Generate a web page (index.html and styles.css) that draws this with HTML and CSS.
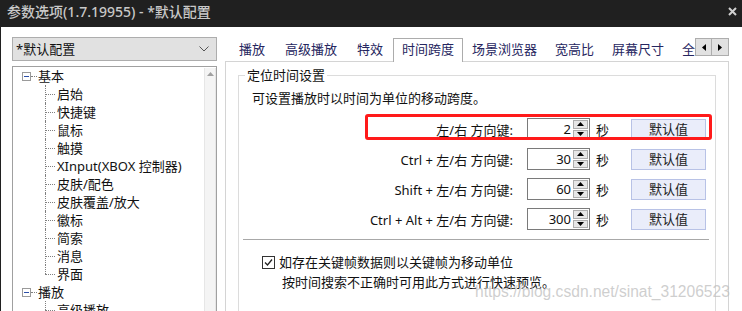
FILE: index.html
```html
<!DOCTYPE html>
<html lang="zh-CN">
<head>
    <meta charset="UTF-8">
    <title>参数选项</title>
    <link rel="stylesheet" href="styles.css">
</head>
<body>
    <div class="titlebar">
        <span class="title">参数选项(1.7.19955) - *默认配置</span>
        <svg class="close" width="9" height="9" viewBox="0 0 9 9"><path d="M1 1L8 8M8 1L1 8" stroke="#d0d0d0" stroke-width="2"/></svg>
    </div>

    <div class="window">
        <aside class="sidebar">
            <div class="select">
                <span>*默认配置</span>
                <svg width="10" height="6" viewBox="0 0 10 6"><path d="M0.5 0.5L5 5L9.5 0.5" fill="none" stroke="#555" stroke-width="1"/></svg>
            </div>
            <div class="tree">
                <ul class="tree-list">
                    <li class="node">
                        <div class="row root"><span class="toggle"></span><span class="dots"></span><span>基本</span></div>
                        <ul class="children">
                            <li class="row child"><span class="hdots"></span>启始</li>
                            <li class="row child"><span class="hdots"></span>快捷键</li>
                            <li class="row child"><span class="hdots"></span>鼠标</li>
                            <li class="row child"><span class="hdots"></span>触摸</li>
                            <li class="row child"><span class="hdots"></span>XInput(XBOX 控制器)</li>
                            <li class="row child"><span class="hdots"></span>皮肤/配色</li>
                            <li class="row child"><span class="hdots"></span>皮肤覆盖/放大</li>
                            <li class="row child"><span class="hdots"></span>徽标</li>
                            <li class="row child"><span class="hdots"></span>简索</li>
                            <li class="row child"><span class="hdots"></span>消息</li>
                            <li class="row child"><span class="hdots"></span>界面</li>
                        </ul>
                    </li>
                    <li class="node">
                        <div class="row root"><span class="toggle"></span><span class="dots"></span><span>播放</span></div>
                        <ul class="children open">
                            <li class="row child"><span class="hdots"></span>高级播放</li>
                        </ul>
                    </li>
                </ul>
                <div class="vscroll">
                    <svg width="7" height="4" viewBox="0 0 7 4"><path d="M0 4L3.5 0L7 4Z" fill="#a0a0a0"/></svg>
                </div>
            </div>
        </aside>

        <section class="options">
            <div class="tabs">
                <div class="tab">播放</div>
                <div class="tab">高级播放</div>
                <div class="tab">特效</div>
                <div class="tab active">时间跨度</div>
                <div class="tab narrow">场景浏览器</div>
                <div class="tab narrow">宽高比</div>
                <div class="tab narrow">屏幕尺寸</div>
                <div class="tab narrow">全屏</div>
                <div class="tab-scroll">
                    <span class="arrow"><svg width="4" height="7" viewBox="0 0 4 7"><path d="M4 0L0 3.5L4 7Z" fill="#000"/></svg></span>
                    <span class="arrow"><svg width="4" height="7" viewBox="0 0 4 7"><path d="M0 0L4 3.5L0 7Z" fill="#000"/></svg></span>
                </div>
            </div>

            <div class="panel">
                <fieldset class="group">
                    <legend>定位时间设置</legend>
                    <p class="hint">可设置播放时以时间为单位的移动跨度。</p>

                    <div class="rows">
                        <div class="key-row">
                            <span class="key-label">左/右 方向键:</span>
                            <div class="spin"><span class="spin-value">2</span><span class="spin-btns"><span class="sb"><svg width="7" height="4" viewBox="0 0 7 4"><path d="M0 4L3.5 0L7 4Z"/></svg></span><span class="sb"><svg width="7" height="4" viewBox="0 0 7 4"><path d="M0 0L3.5 4L7 0Z"/></svg></span></span></div>
                            <span class="unit">秒</span>
                            <button class="btn">默认值</button>
                        </div>
                        <div class="key-row">
                            <span class="key-label">Ctrl + 左/右 方向键:</span>
                            <div class="spin"><span class="spin-value">30</span><span class="spin-btns"><span class="sb"><svg width="7" height="4" viewBox="0 0 7 4"><path d="M0 4L3.5 0L7 4Z"/></svg></span><span class="sb"><svg width="7" height="4" viewBox="0 0 7 4"><path d="M0 0L3.5 4L7 0Z"/></svg></span></span></div>
                            <span class="unit">秒</span>
                            <button class="btn">默认值</button>
                        </div>
                        <div class="key-row">
                            <span class="key-label">Shift + 左/右 方向键:</span>
                            <div class="spin"><span class="spin-value">60</span><span class="spin-btns"><span class="sb"><svg width="7" height="4" viewBox="0 0 7 4"><path d="M0 4L3.5 0L7 4Z"/></svg></span><span class="sb"><svg width="7" height="4" viewBox="0 0 7 4"><path d="M0 0L3.5 4L7 0Z"/></svg></span></span></div>
                            <span class="unit">秒</span>
                            <button class="btn">默认值</button>
                        </div>
                        <div class="key-row">
                            <span class="key-label">Ctrl + Alt + 左/右 方向键:</span>
                            <div class="spin"><span class="spin-value">300</span><span class="spin-btns"><span class="sb"><svg width="7" height="4" viewBox="0 0 7 4"><path d="M0 4L3.5 0L7 4Z"/></svg></span><span class="sb"><svg width="7" height="4" viewBox="0 0 7 4"><path d="M0 0L3.5 4L7 0Z"/></svg></span></span></div>
                            <span class="unit">秒</span>
                            <button class="btn">默认值</button>
                        </div>
                    </div>

                    <div class="separator"></div>

                    <label class="check">
                        <span class="box"><svg width="11" height="11" viewBox="0 0 11 11"><path d="M2 5.5L4.5 8L9 2.5" fill="none" stroke="#222" stroke-width="1.3"/></svg></span>
                        如存在关键帧数据则以关键帧为移动单位
                    </label>
                    <p class="note">按时间搜索不正确时可用此方式进行快速预览。</p>
                </fieldset>
            </div>
        </section>
    </div>

    <div class="highlight"></div>
    <div class="watermark">https://blog.csdn.net/sinat_31206523</div>
</body>
</html>
```

FILE: styles.css
```css
* {
    margin: 0;
    padding: 0;
    box-sizing: border-box;
}

html, body {
    width: 742px;
    height: 311px;
    overflow: hidden;
    background-color: #fff;
    font-family: "Noto Sans", "Noto Sans CJK SC", sans-serif;
    font-size: 13px;
    color: #111;
}

body {
    position: relative;
}

/* title bar */
.titlebar {
    height: 27px;
    background-color: #202020;
    display: flex;
    align-items: center;
    justify-content: space-between;
    padding: 0 5px 3px 7px;
}

.title {
    font-size: 14px;
    line-height: 18px;
    color: #c8c8c8;
    font-weight: 500;
}

.close {
    margin-top: -2px;
}

.window {
    display: flex;
    height: 284px;
    padding-top: 10px;
    border-left: 1px solid #202020;
}

/* left column */
.sidebar {
    width: 205px;
    margin-left: 11px;
    display: flex;
    flex-direction: column;
}

.select {
    height: 24px;
    flex-shrink: 0;
    background-color: #e1e1e1;
    border: 1px solid #adadad;
    display: flex;
    align-items: center;
    justify-content: space-between;
    padding: 0 7px 0 3px;
    line-height: 18px;
}

.tree {
    margin-top: 5px;
    border: 1px solid #a0a0a0;
    border-bottom: none;
    flex: 1;
    min-height: 0;
    display: flex;
    overflow: hidden;
}

.tree-list {
    list-style: none;
    flex: 1;
}

.tree-list ul {
    list-style: none;
}

.row {
    height: 18px;
    line-height: 18px;
    display: flex;
    align-items: center;
    white-space: nowrap;
}

.root {
    padding-left: 9px;
}

.toggle {
    width: 9px;
    height: 9px;
    border: 1px solid #9a9a9a;
    background-color: #fff;
    display: flex;
    align-items: center;
    justify-content: center;
}

.toggle::after {
    content: "";
    width: 5px;
    height: 1px;
    background-color: #2c4fa8;
}

.dots {
    width: 6px;
    border-top: 1px dotted #808080;
    margin-right: 1px;
}

.children .child {
    position: relative;
    padding-left: 32px;
}

.children .child::before {
    content: "";
    position: absolute;
    left: 32px;
    top: 0;
    height: 100%;
    border-left: 1px dotted #808080;
}

.children .child:last-child::before {
    height: 9px;
}

.hdots {
    width: 10px;
    border-top: 1px dotted #808080;
    margin-right: 2px;
}

.vscroll {
    width: 12px;
    border-left: 1px solid #e6e6e6;
    border-right: 1px solid #e6e6e6;
    margin: 1px 0 0 0;
    background-color: #f4f4f4;
    display: flex;
    justify-content: center;
    padding-top: 4px;
}

/* right column */
.options {
    width: 504px;
    margin-left: 8px;
    display: flex;
    flex-direction: column;
    overflow: hidden;
}

.tabs {
    height: 24px;
    flex-shrink: 0;
    display: flex;
    align-items: flex-end;
    padding-left: 4px;
    position: relative;
}

.tab {
    padding: 0 9px;
    height: 23px;
    line-height: 21px;
    color: #262660;
    white-space: nowrap;
    border: 1px solid transparent;
    border-bottom: none;
}

.tab.active {
    padding: 0 8px;
    background-color: #fff;
    border-color: #acacac;
    margin-bottom: -1px;
    height: 24px;
    z-index: 1;
}

.tab.narrow {
    padding: 0 8px;
}

.tab-scroll {
    position: absolute;
    right: 0;
    top: 1px;
    display: flex;
    background-color: #fff;
    z-index: 2;
}

.arrow {
    width: 17px;
    height: 18px;
    background-color: #e1e1e1;
    border: 1px solid #adadad;
    display: flex;
    align-items: center;
    justify-content: center;
}

.arrow + .arrow {
    border-left: none;
}

.panel {
    flex: 1;
    min-height: 0;
    overflow: hidden;
    border: 1px solid #d4d4d4;
    border-bottom: none;
    box-shadow: 2px 0 0 #ececec;
    padding: 5px 12px 0 12px;
}

.group {
    border: 1px solid #dcdcdc;
    border-bottom: none;
    height: 260px;
    padding: 0;
}

.group legend {
    margin-left: 6px;
    padding: 0 2px;
    line-height: 16px;
    color: #111;
}

.hint {
    margin: 7px 0 0 13px;
    line-height: 16px;
}

.rows {
    margin-top: 12px;
    display: flex;
    flex-direction: column;
    gap: 8px;
}

.key-row {
    display: flex;
    align-items: center;
    height: 22px;
}

.key-label {
    width: 274px;
    text-align: right;
    white-space: nowrap;
}

.spin {
    margin-left: 14px;
    width: 63px;
    height: 22px;
    border: 1px solid #7a7a7a;
    display: flex;
    background-color: #fff;
}

.spin-value {
    flex: 1;
    text-align: right;
    padding-right: 2px;
    line-height: 20px;
}

.spin-btns {
    width: 16px;
    display: flex;
    flex-direction: column;
    gap: 1px;
    padding: 1px 1px 1px 0;
}

.sb {
    flex: 1;
    background-color: #e6e6e6;
    border: 1px solid #adadad;
    display: flex;
    align-items: center;
    justify-content: center;
}

.sb svg {
    fill: #000;
}

.unit {
    margin-left: 6px;
}

.btn {
    margin-left: 22px;
    width: 75px;
    height: 21px;
    background-color: #eaedfa;
    border: 1px solid #b8c2e6;
    font-family: "Noto Sans", "Noto Sans CJK SC", sans-serif;
    font-size: 13px;
    color: #222;
    line-height: 19px;
}

.separator {
    height: 1px;
    background-color: #a8a8a8;
    margin: 9px 6px 0 4px;
}

.check {
    display: flex;
    align-items: center;
    margin: 14px 0 0 23px;
    line-height: 16px;
}

.box {
    width: 13px;
    height: 13px;
    border: 1px solid #333;
    margin-right: 4px;
    display: flex;
    align-items: center;
    justify-content: center;
}

.note {
    margin: 4px 0 0 43px;
    line-height: 16px;
}

/* annotation overlays */
.highlight {
    position: absolute;
    left: 365px;
    top: 114px;
    width: 347px;
    height: 26px;
    border: 3px solid #ff1a1a;
    border-radius: 3px;
}

.watermark {
    position: absolute;
    left: 475px;
    top: 283px;
    font-family: "Liberation Sans", Arial, sans-serif;
    font-size: 15.6px;
    line-height: 18px;
    color: rgba(190, 190, 190, 0.75);
}
```
